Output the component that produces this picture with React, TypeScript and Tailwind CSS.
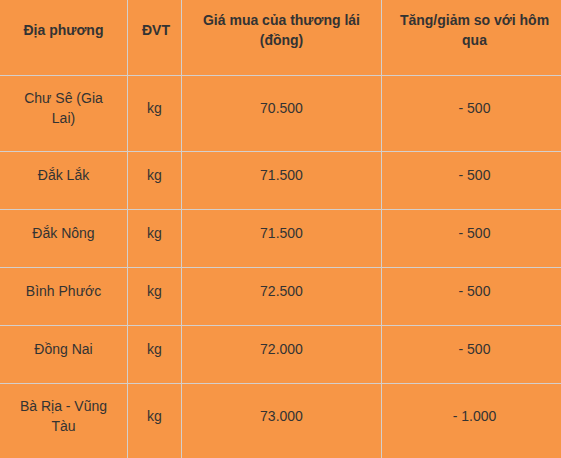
const ROWS = [
  { place: 'Chư Sê (Gia Lai)', unit: 'kg', price: '70.500', change: '- 500' },
  { place: 'Đắk Lắk', unit: 'kg', price: '71.500', change: '- 500' },
  { place: 'Đắk Nông', unit: 'kg', price: '71.500', change: '- 500' },
  { place: 'Bình Phước', unit: 'kg', price: '72.500', change: '- 500' },
  { place: 'Đồng Nai', unit: 'kg', price: '72.000', change: '- 500' },
  { place: 'Bà Rịa - Vũng Tàu', unit: 'kg', price: '73.000', change: '- 1.000' },
]

const base = 'border border-[#d4cfcc] px-[14px] text-center align-middle leading-5'
const head = `${base} pt-[10px] pb-[25px]`
const body = `${base} pt-[12px] pb-[23px]`

export default function App() {
  return (
    <div className="h-[458px] w-[561px] overflow-hidden bg-[#f79646]">
      <table
        className="-ml-px -mt-px w-[568px] table-fixed border-collapse text-[14px] text-[#333]"
        style={{ fontFamily: '"Liberation Sans", Arial, sans-serif' }}
      >
        <colgroup>
          <col className="w-[128px]" />
          <col className="w-[54px]" />
          <col className="w-[200px]" />
          <col className="w-[186px]" />
        </colgroup>
        <thead>
          <tr className="h-[76px] font-bold">
            <th className={head}>Địa phương</th>
            <th className={head}>ĐVT</th>
            <th className={head}>Giá mua của thương lái (đồng)</th>
            <th className={head}>Tăng/giảm so với hôm qua</th>
          </tr>
        </thead>
        <tbody>
          {ROWS.map((r) => (
            <tr key={r.place} className="h-[58px]">
              <td className={body}>{r.place}</td>
              <td className={body}>{r.unit}</td>
              <td className={body}>{r.price}</td>
              <td className={body}>{r.change}</td>
            </tr>
          ))}
        </tbody>
      </table>
    </div>
  )
}
